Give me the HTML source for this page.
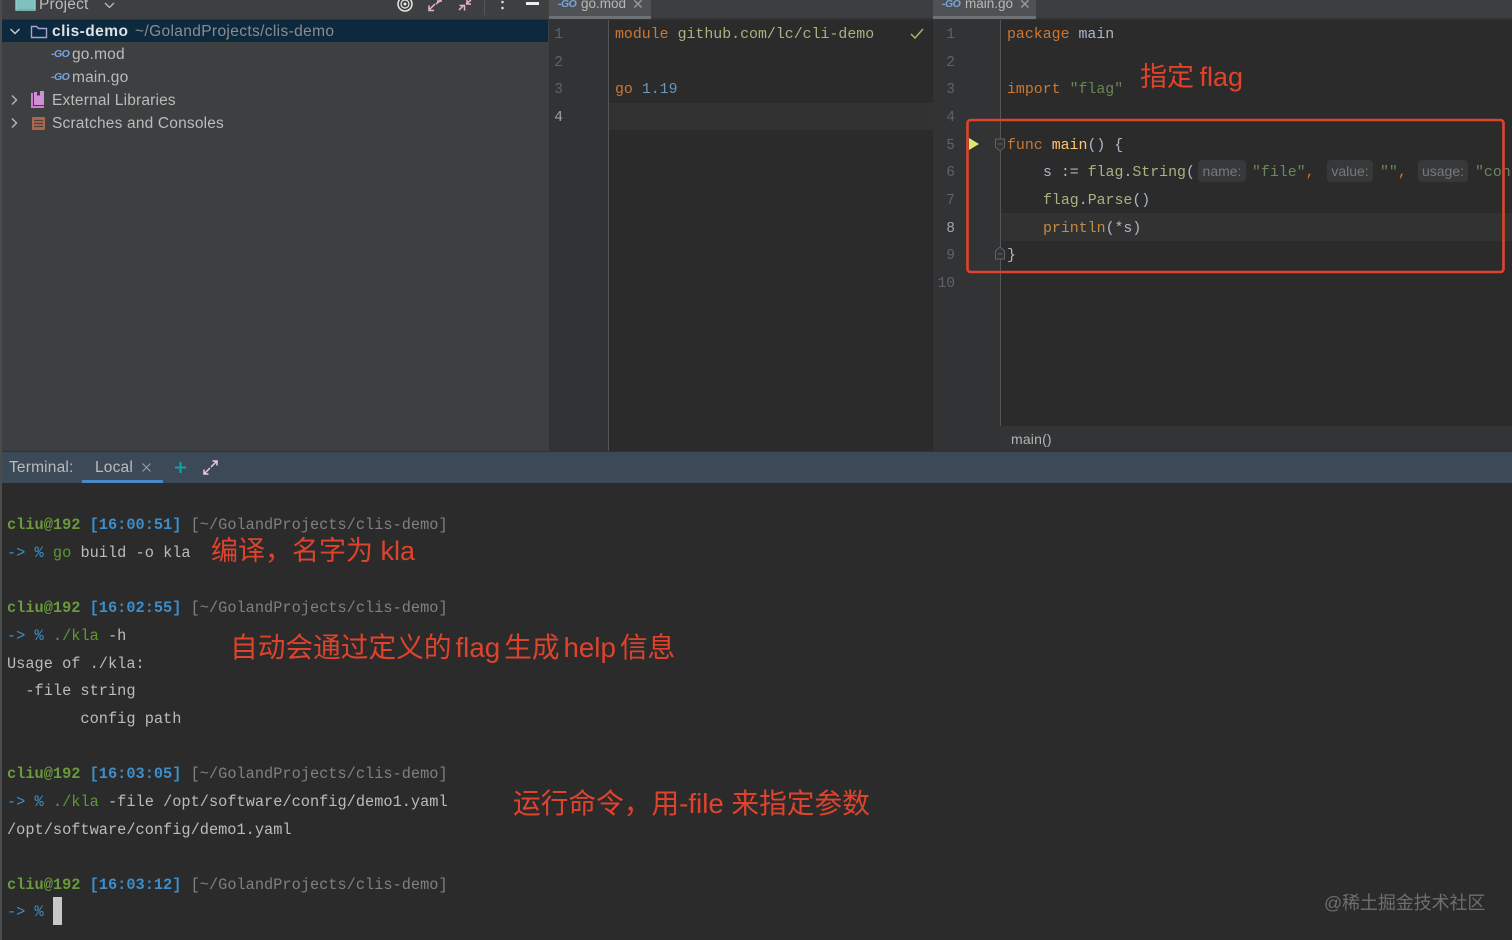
<!DOCTYPE html>
<html><head><meta charset="utf-8">
<style>
html,body{margin:0;padding:0;width:1512px;height:940px;overflow:hidden;background:#2b2b2b}
#r{position:relative;width:1512px;height:940px;overflow:hidden}
.b{position:absolute}
.s,.m,.c{position:absolute;white-space:pre;line-height:20px}
.s{font-family:"Liberation Sans",sans-serif;font-size:15.5px;color:#bbbbbb;letter-spacing:.18px}
.m{font-family:"Liberation Mono",monospace;font-size:15.3px;color:#a9b7c6}
.e{font-size:14.9px}
.c{font-family:"Liberation Sans","Noto Sans CJK SC",sans-serif;font-size:27px;color:#e0432c;line-height:36px}
.n{color:#606366;font-size:14.5px;text-align:right;width:20px}
.k{color:#cc7832}.gs{color:#6a8759}.bl{color:#6897bb}.y{color:#ffc66d}.o{color:#c18a45}.f{color:#a9b37f}
.u{color:#6a9a3c;font-weight:bold}.t{color:#3d8ec9;font-weight:bold}.d{color:#808080}.a{color:#3d8ec9}.w{color:#bbbbbb}.gr{color:#5c9a2e}
.h{position:absolute;background:#363839;border-radius:4px;height:22px;color:#787878;font-family:"Liberation Sans",sans-serif;font-size:14px;line-height:22px;text-align:center}
.i{position:absolute;font-family:"Liberation Sans",sans-serif;font-size:10.500px;line-height:20px;font-weight:bold;color:#7aa3e0;font-style:italic;letter-spacing:-.5px;white-space:pre}
</style></head><body><div id="r">

<!-- panels -->
<div class="b" style="left:0;top:0;width:549px;height:451px;background:#3d3f40"></div>
<div class="b" style="left:0;top:0;width:2px;height:940px;background:#4a4c4e"></div>
<div class="b" style="left:2px;top:19px;width:546px;height:1px;background:#323232"></div>
<div class="b" style="left:2px;top:20px;width:546px;height:22px;background:#0d293e"></div>

<div class="b" style="left:549px;top:0;width:384px;height:20px;background:#3c3f41"></div>
<div class="b" style="left:933px;top:0;width:579px;height:20px;background:#3c3f41"></div>
<div class="b" style="left:549px;top:18px;width:963px;height:2px;background:#323232"></div>
<div class="b" style="left:549px;top:0;width:102px;height:18px;background:#4e5254"></div>
<div class="b" style="left:933px;top:0;width:103px;height:18px;background:#4e5254"></div>
<div class="b" style="left:549px;top:16px;width:102px;height:3px;background:#6e7275"></div>
<div class="b" style="left:933px;top:16px;width:103px;height:3px;background:#6e7275"></div>

<div class="b" style="left:549px;top:20px;width:59px;height:431px;background:#313335"></div>
<div class="b" style="left:608px;top:20px;width:1px;height:431px;background:#555555"></div>
<div class="b" style="left:933px;top:20px;width:67px;height:431px;background:#313335"></div>
<div class="b" style="left:1000px;top:20px;width:1px;height:406px;background:#555555"></div>
<div class="b" style="left:609px;top:103px;width:324px;height:27px;background:#323232"></div>
<div class="b" style="left:1001px;top:213px;width:511px;height:28px;background:#323232"></div>
<div class="b" style="left:1000px;top:426px;width:512px;height:25px;background:#333435"></div>

<!-- project header -->
<svg class="b" style="left:0;top:0" width="549" height="20" fill="none">
<path d="M16 0h19v9H16z" fill="#7fc1bd"/><path d="M16 0v10h19V0" stroke="#8fd0cc" stroke-width="1.4"/>
<path d="M105 3l4.500 4.500L114 3" stroke="#bbbbbb" stroke-width="1.3"/>
<circle cx="405" cy="4" r="7" stroke="#e8e8e8" stroke-width="1.5"/><circle cx="405" cy="4" r="4" stroke="#e8e8e8" stroke-width="1.2"/><circle cx="405" cy="4" r="1.5" fill="#e8e8e8"/>
<path d="M429 10l6-6M429 5.500V10.500h5M436 4l5-4M437 1h5" stroke="#e8b4d0" stroke-width="1.5"/>
<path d="M459 10l5-5M459.500 5.500h5v5M466 4l5-4M467 0v4h4" stroke="#e8b4d0" stroke-width="1.5"/>
<rect x="484" y="0" width="1" height="15" fill="#555"/>
<circle cx="502.500" cy="2" r="1.300" fill="#ddd"/><circle cx="502.500" cy="8" r="1.300" fill="#ddd"/>
<rect x="526" y="2" width="13" height="3" fill="#eeeeee"/>
</svg>
<div class="s" style="left:39px;top:-5px">Project</div>

<!-- tree -->
<svg class="b" style="left:0;top:20px" width="60" height="120" fill="none">
<path d="M10.500 9l4.500 4.500L19.500 9" stroke="#c8c8c8" stroke-width="1.500"/>
<path d="M31.500 6.500h5l2 2h8v9h-15z" stroke="#a99fd8" stroke-width="1.400"/>
<path d="M12 75.500l4.500 4.500L12 84.500M12 98.500l4.500 4.500L12 107.500" stroke="#b0b0b0" stroke-width="1.500"/>
<path d="M31 73h2v13h11v2H31z" fill="#c67fc8"/><path d="M34 72h3v4l2-1 1 1v-5h4v14H34z" fill="#d08fd4"/>
<rect x="32" y="97" width="13" height="13" rx="1" fill="#a9694f"/><path d="M34 100.500h9M34 103.500h9M34 106.500h9" stroke="#4a4240" stroke-width="1.200"/>
</svg>
<div class="s" style="left:52px;top:22px;color:#dfe1e5;font-weight:bold;letter-spacing:.45px">clis-demo</div>
<div class="s" style="left:135px;top:22px;color:#8a8d8f;letter-spacing:.36px">~/GolandProjects/clis-demo</div>
<div class="s" style="left:72px;top:45px">go.mod</div>
<div class="s" style="left:72px;top:68px">main.go</div>
<div class="s" style="left:52px;top:91px">External Libraries</div>
<div class="s" style="left:52px;top:114px">Scratches and Consoles</div>
<div class="i" style="left:51px;top:44px">-GO</div>
<div class="i" style="left:51px;top:67px">-GO</div>

<!-- tabs -->
<div class="i" style="left:558px;top:-6px">-GO</div>
<div class="s" style="left:581px;top:-6px;font-size:13.500px;color:#b8b8b8;letter-spacing:0">go.mod</div>
<div class="s" style="left:632px;top:-6px;font-size:14px;color:#9a9a9a">✕</div>
<div class="i" style="left:942px;top:-6px">-GO</div>
<div class="s" style="left:965px;top:-6px;font-size:13.500px;color:#b8b8b8;letter-spacing:0">main.go</div>
<div class="s" style="left:1019px;top:-6px;font-size:14px;color:#9a9a9a">✕</div>

<!-- go.mod -->
<div class="m n" style="left:543px;top:25px">1</div>
<div class="m n" style="left:543px;top:53px">2</div>
<div class="m n" style="left:543px;top:80px">3</div>
<div class="m n" style="left:543px;top:108px;color:#a4a3a3">4</div>
<div class="m e" style="left:615px;top:25px"><span class="k">module</span> <span class="f">github.com/lc/cli-demo</span></div>
<div class="m e" style="left:615px;top:80px"><span class="k">go</span> <span class="bl">1.19</span></div>
<svg class="b" style="left:909px;top:27px" width="16" height="14" fill="none"><path d="M2 7l4 4 8-9" stroke="#a5b85c" stroke-width="1.500"/></svg>

<!-- main.go -->
<div class="m n" style="left:935px;top:25px">1</div>
<div class="m n" style="left:935px;top:53px">2</div>
<div class="m n" style="left:935px;top:80px">3</div>
<div class="m n" style="left:935px;top:108px">4</div>
<div class="m n" style="left:935px;top:136px">5</div>
<div class="m n" style="left:935px;top:163px">6</div>
<div class="m n" style="left:935px;top:191px">7</div>
<div class="m n" style="left:935px;top:219px;color:#a4a3a3">8</div>
<div class="m n" style="left:935px;top:246px">9</div>
<div class="m n" style="left:935px;top:274px">10</div>
<div class="m e" style="left:1007px;top:25px"><span class="k">package</span> main</div>
<div class="m e" style="left:1007px;top:80px"><span class="k">import</span> <span class="gs">"flag"</span></div>
<div class="m e" style="left:1007px;top:136px"><span class="k">func</span> <span class="y">main</span>() {</div>
<div class="h" style="left:1198px;top:160px;width:48px">name:</div>
<div class="h" style="left:1327px;top:160px;width:46px">value:</div>
<div class="h" style="left:1418px;top:160px;width:50px">usage:</div>
<div class="m e" style="left:1043px;top:163px">s := <span class="f">flag</span>.<span class="f">String</span>(</div>
<div class="m e" style="left:1252px;top:163px"><span class="gs">"file"</span><span class="k">,</span></div>
<div class="m e" style="left:1380px;top:163px"><span class="gs">""</span><span class="k">,</span></div>
<div class="m e" style="left:1475px;top:163px"><span class="gs">"con</span></div>
<div class="m e" style="left:1043px;top:191px"><span class="f">flag</span>.<span class="f">Parse</span>()</div>
<div class="m e" style="left:1043px;top:219px"><span class="o">println</span>(*s)</div>
<div class="m e" style="left:1007px;top:246px">}</div>
<div class="s" style="left:1011px;top:429px;font-size:14px;color:#b5b5b5">main()</div>
<svg class="b" style="left:966px;top:118px" width="546" height="156" fill="none">
<path d="M3 20l10 6-10 6z" fill="#dfe86a"/>
<path d="M29.500 21h9v8l-4.500 4-4.500-4z" fill="#313335" stroke="#606366"/><path d="M31.500 26h5" stroke="#606366"/>
<path d="M29.500 141h9v-8l-4.500-4-4.500 4z" fill="#313335" stroke="#606366"/><path d="M31.500 136h5" stroke="#606366"/>
<rect x="1.500" y="2" width="536" height="152" rx="3" stroke="#e0432c" stroke-width="2.600"/>
</svg>
<div class="c" style="left:1140px;top:59px;word-spacing:-2px">指定 flag</div>

<!-- terminal -->
<div class="b" style="left:2px;top:451px;width:1510px;height:1px;background:#323232"></div>
<div class="b" style="left:2px;top:452px;width:1510px;height:31px;background:#3c4957"></div>
<div class="b" style="left:82px;top:480px;width:81px;height:3px;background:#4a88c7"></div>
<div class="s" style="left:9px;top:458px">Terminal:</div>
<div class="s" style="left:95px;top:458px">Local</div>
<svg class="b" style="left:140px;top:458px" width="80" height="20" fill="none">
<path d="M2.500 5.500l8 8M10.500 5.500l-8 8" stroke="#a0a0a0" stroke-width="1.100"/>
<path d="M40.500 4v11M35 9.500h11" stroke="#12a4a8" stroke-width="2"/>
<path d="M64 16l6-6M64 11.500V16h4.500M71 9l6-6M72.500 3H77v4.500" stroke="#f0c8e0" stroke-width="1.500"/>
</svg>

<div class="m" style="left:7px;top:515px"><span class="u">cliu@192</span> <span class="t">[16:00:51]</span> <span class="d">[~/GolandProjects/clis-demo]</span></div>
<div class="m" style="left:7px;top:543px"><span class="a">-&gt; %</span> <span class="gr">go</span> <span class="w">build -o kla</span></div>
<div class="m" style="left:7px;top:598px"><span class="u">cliu@192</span> <span class="t">[16:02:55]</span> <span class="d">[~/GolandProjects/clis-demo]</span></div>
<div class="m" style="left:7px;top:626px"><span class="a">-&gt; %</span> <span class="gr">./kla</span> <span class="w">-h</span></div>
<div class="m w" style="left:7px;top:654px">Usage of ./kla:</div>
<div class="m w" style="left:7px;top:681px">  -file string</div>
<div class="m w" style="left:7px;top:709px">        config path</div>
<div class="m" style="left:7px;top:764px"><span class="u">cliu@192</span> <span class="t">[16:03:05]</span> <span class="d">[~/GolandProjects/clis-demo]</span></div>
<div class="m" style="left:7px;top:792px"><span class="a">-&gt; %</span> <span class="gr">./kla</span> <span class="w">-file /opt/software/config/demo1.yaml</span></div>
<div class="m w" style="left:7px;top:820px">/opt/software/config/demo1.yaml</div>
<div class="m" style="left:7px;top:875px"><span class="u">cliu@192</span> <span class="t">[16:03:12]</span> <span class="d">[~/GolandProjects/clis-demo]</span></div>
<div class="m" style="left:7px;top:902px"><span class="a">-&gt; %</span></div>
<div class="b" style="left:53px;top:897px;width:9px;height:28px;background:#c8c8c8"></div>

<div class="c" style="left:211px;top:533px">编译，名字为 kla</div>
<div class="c" style="left:230px;top:630px;font-size:27.700px;word-spacing:-3.700px">自动会通过定义的 flag 生成 help 信息</div>
<div class="c" style="left:513px;top:786px;font-size:27.700px">运行命令，用-file 来指定参数</div>
<div class="c" style="left:1324px;top:885px;font-size:17.900px;color:#6f6f6f">@稀土掘金技术社区</div>
</div></body></html>
